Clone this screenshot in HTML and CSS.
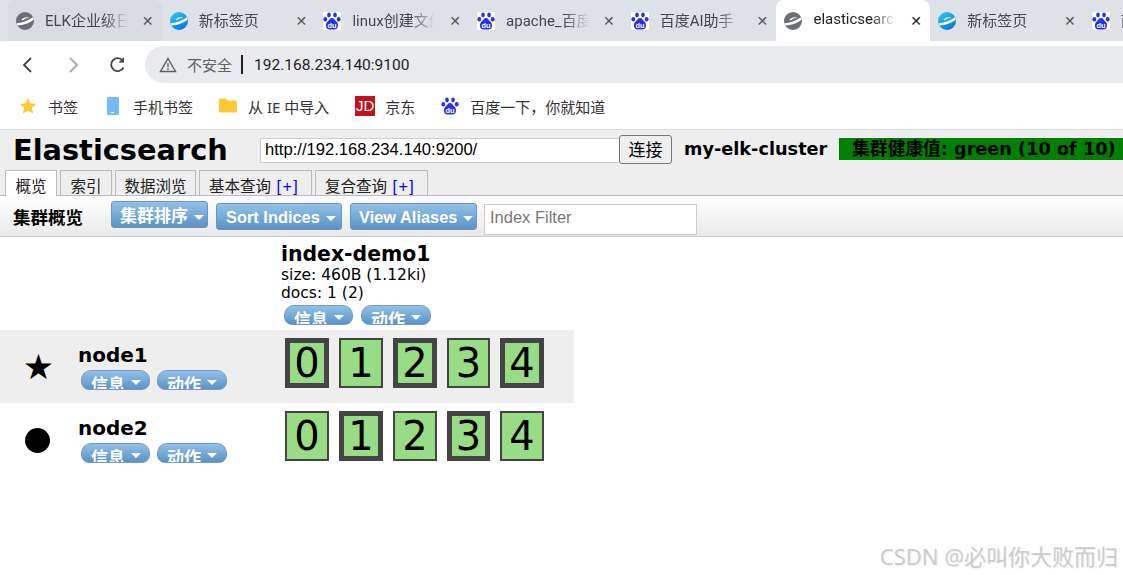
FILE: index.html
```html
<!DOCTYPE html>
<html lang="en">
<head>
    <meta charset="UTF-8">
    <title>elasticsearch-head</title>
    <link rel="stylesheet" href="styles.css">
</head>
<body>
    <svg class="defs" width="0" height="0">
        <symbol id="ie-gray" viewBox="0 0 18 18">
            <circle cx="9" cy="9" r="9" fill="#6b6e73"/>
            <path d="M0.5 11.2 C6 11 12 8.5 17.2 5.2 L17.8 7.8 C12.5 11.5 7 13.4 1.4 13.6 Z" fill="#fff"/>
            <path d="M5.5 7.4 C8 5.4 11 4.8 13.4 5.6 C11 6 8.5 7 6.4 8.6 Z" fill="#fff"/>
        </symbol>
        <linearGradient id="ie-grad" x1="0" y1="0" x2="0.6" y2="1">
            <stop offset="0" stop-color="#2ccdf5"/>
            <stop offset="1" stop-color="#0b7ade"/>
        </linearGradient>
        <symbol id="ie-blue" viewBox="0 0 18 18">
            <circle cx="9" cy="9" r="9" fill="url(#ie-grad)"/>
            <path d="M0.5 11.2 C6 11 12 8.5 17.2 5.2 L17.8 7.8 C12.5 11.5 7 13.4 1.4 13.6 Z" fill="#fff"/>
            <path d="M5.5 7.4 C8 5.4 11 4.8 13.4 5.6 C11 6 8.5 7 6.4 8.6 Z" fill="#fff"/>
        </symbol>
        <symbol id="paw" viewBox="0 0 18 18">
            <ellipse cx="6" cy="3" rx="1.8" ry="2.4" fill="#2932e1"/>
            <ellipse cx="12" cy="3" rx="1.8" ry="2.4" fill="#2932e1"/>
            <ellipse cx="2.3" cy="7.2" rx="1.9" ry="2.3" fill="#2932e1"/>
            <ellipse cx="15.7" cy="7.2" rx="1.9" ry="2.3" fill="#2932e1"/>
            <path d="M9 6 C6.8 6 6.4 8.2 4.4 9.8 C2.4 11.4 2.2 17.4 6 17.4 H12 C15.8 17.4 15.6 11.4 13.6 9.8 C11.6 8.2 11.2 6 9 6 Z" fill="#2932e1"/>
            <text x="9" y="15.8" text-anchor="middle" font-size="7.4" font-weight="700" font-family="Liberation Sans" fill="#fff">du</text>
        </symbol>
    </svg>

    <div class="tabstrip">
        <div class="tab tab-hover"><svg class="fav"><use href="#ie-gray"/></svg><span class="tab-title">ELK企业级日志</span><span class="tab-x">✕</span></div>
        <div class="tab"><svg class="fav"><use href="#ie-blue"/></svg><span class="tab-title">新标签页</span><span class="tab-x">✕</span></div>
        <div class="tab"><svg class="fav fav-box"><use href="#paw"/></svg><span class="tab-title">linux创建文件</span><span class="tab-x">✕</span></div>
        <div class="tab"><svg class="fav fav-box"><use href="#paw"/></svg><span class="tab-title">apache_百度百科</span><span class="tab-x">✕</span></div>
        <div class="tab"><svg class="fav fav-box"><use href="#paw"/></svg><span class="tab-title">百度AI助手</span><span class="tab-x">✕</span></div>
        <div class="tab tab-active"><svg class="fav"><use href="#ie-gray"/></svg><span class="tab-title">elasticsearch-head</span><span class="tab-x">✕</span></div>
        <div class="tab"><svg class="fav"><use href="#ie-blue"/></svg><span class="tab-title">新标签页</span><span class="tab-x">✕</span></div>
        <div class="tab"><svg class="fav fav-box"><use href="#paw"/></svg><span class="tab-title">南京</span></div>
    </div>

    <div class="navbar">
        <svg class="nav-icon" viewBox="0 0 20 20"><path d="M13 3 L6 10 L13 17" fill="none" stroke="#444" stroke-width="1.8"/></svg>
        <svg class="nav-icon" viewBox="0 0 20 20"><path d="M7 3 L14 10 L7 17" fill="none" stroke="#aaa" stroke-width="1.8"/></svg>
        <svg class="nav-icon" viewBox="0 0 20 20"><path d="M15.5 12.5 A6.5 6.5 0 1 1 14.6 5.4" fill="none" stroke="#444" stroke-width="1.8"/><path d="M16 2 V7.5 H10.5 Z" fill="#444"/></svg>
        <div class="address">
            <svg class="warn" viewBox="0 0 18 18"><path d="M9 2.5 L16.5 15.5 H1.5 Z" fill="none" stroke="#5f6368" stroke-width="1.5"/><path d="M9 7 V11.5 M9 12.5 V14" stroke="#5f6368" stroke-width="1.4"/></svg>
            <span class="insecure">不安全</span>
            <span class="url">192.168.234.140:9100</span>
        </div>
    </div>

    <div class="bookmarks">
        <div class="bm"><svg class="bm-icon" viewBox="0 0 18 18"><path d="M9 1 L11.4 6.3 L17 7 L12.9 10.9 L14 16.6 L9 13.8 L4 16.6 L5.1 10.9 L1 7 L6.6 6.3 Z" fill="#fcc934"/></svg>书签</div>
        <div class="bm"><svg class="bm-icon" viewBox="0 0 18 18"><rect x="3" y="0" width="12" height="18" rx="1.5" fill="#74b9fb"/><rect x="7" y="15" width="3" height="1" fill="#fff"/></svg>手机书签</div>
        <div class="bm"><svg class="bm-icon" viewBox="0 0 18 18"><path d="M0 3 Q0 1.5 1.5 1.5 H6.5 L8.5 3.5 H16.5 Q18 3.5 18 5 V14 Q18 15.5 16.5 15.5 H1.5 Q0 15.5 0 14 Z" fill="#fcc934"/></svg>从 IE 中导入</div>
        <div class="bm"><span class="jd">JD</span>京东</div>
        <div class="bm"><svg class="bm-icon" viewBox="0 0 18 18"><use href="#paw"/></svg>百度一下，你就知道</div>
    </div>

    <div class="es-header">
        <h1 class="es-title">Elasticsearch</h1>
        <input class="es-url" type="text" value="http://192.168.234.140:9200/">
        <button class="es-connect">连接</button>
        <span class="es-cluster">my-elk-cluster</span>
        <span class="es-health">集群健康值: green (10 of 10)</span>
    </div>

    <div class="es-tabs">
        <div class="es-tab es-tab-active">概览</div>
        <div class="es-tab">索引</div>
        <div class="es-tab">数据浏览</div>
        <div class="es-tab es-tab-wide">基本查询 <span class="plus">[+]</span></div>
        <div class="es-tab es-tab-wide">复合查询 <span class="plus">[+]</span></div>
    </div>

    <div class="toolbar">
        <h2 class="toolbar-title">集群概览</h2>
        <div class="menu-btn menu-cjk">集群排序<i class="caret"></i></div>
        <div class="menu-btn menu-sort">Sort Indices<i class="caret"></i></div>
        <div class="menu-btn menu-alias">View Aliases<i class="caret"></i></div>
        <input class="filter" type="text" placeholder="Index Filter">
    </div>

    <div class="overview">
        <div class="index-row">
            <div class="index-head">
                <div class="index-name">index-demo1</div>
                <div class="index-meta">size: 460B (1.12ki)</div>
                <div class="index-meta">docs: 1 (2)</div>
                <div class="pills pills-index">
                    <div class="pill pill-info">信息<i class="caret"></i></div>
                    <div class="pill pill-act">动作<i class="caret"></i></div>
                </div>
            </div>
        </div>

        <div class="node-row node-row-odd">
            <div class="node-mark">★</div>
            <div class="node-info">
                <div class="node-name">node1</div>
                <div class="pills">
                    <div class="pill pill-info">信息<i class="caret"></i></div>
                    <div class="pill pill-act">动作<i class="caret"></i></div>
                </div>
            </div>
            <div class="shards">
                <div class="shard shard-p">0</div>
                <div class="shard">1</div>
                <div class="shard shard-p">2</div>
                <div class="shard">3</div>
                <div class="shard shard-p">4</div>
            </div>
        </div>

        <div class="node-row">
            <div class="node-mark"><span class="dot"></span></div>
            <div class="node-info">
                <div class="node-name">node2</div>
                <div class="pills">
                    <div class="pill pill-info">信息<i class="caret"></i></div>
                    <div class="pill pill-act">动作<i class="caret"></i></div>
                </div>
            </div>
            <div class="shards">
                <div class="shard">0</div>
                <div class="shard shard-p">1</div>
                <div class="shard">2</div>
                <div class="shard shard-p">3</div>
                <div class="shard">4</div>
            </div>
        </div>
    </div>

    <div class="watermark">CSDN @必叫你大败而归</div>
</body>
</html>
```

FILE: styles.css
```css
html, body {
    margin: 0;
    height: 575px;
    overflow: hidden;
    background: #fff;
}

body {
    position: relative;
    font-family: "Noto Sans CJK SC", sans-serif;
}

.defs {
    position: absolute;
}

/* browser chrome */
.tabstrip {
    display: flex;
    height: 41px;
    padding-left: 8px;
    background: #dee1e6;
    overflow: hidden;
}

.tab {
    flex: 0 0 153.7px;
    min-width: 0;
    display: flex;
    align-items: center;
    box-sizing: border-box;
    padding: 0 7px 0 8px;
    font-family: Roboto, "Noto Sans CJK SC", sans-serif;
    font-size: 15px;
    color: #45474a;
}

.tab-hover {
    background: #d8dbe2;
    border-radius: 8px 8px 0 0;
}

.tab-active {
    background: #fff;
    border-radius: 8px 8px 0 0;
    color: #222;
}

.fav {
    flex: none;
    width: 18px;
    height: 18px;
}

.fav-box {
    background: #fff;
    border-radius: 2px;
}

.tab-title {
    flex: 1;
    min-width: 0;
    margin: 0 0 3px 11px;
    white-space: nowrap;
    overflow: hidden;
    -webkit-mask-image: linear-gradient(to right, #000 70%, transparent 100%);
    mask-image: linear-gradient(to right, #000 70%, transparent 100%);
}

.tab-x {
    flex: none;
    width: 14px;
    margin-left: 13px;
    font-family: "DejaVu Sans", sans-serif;
    font-size: 14px;
    font-weight: 700;
    text-align: center;
    color: #555;
}

.tab-active .tab-x {
    color: #222;
}

.navbar {
    display: flex;
    height: 42px;
    box-sizing: border-box;
    padding-top: 5px;
}

.nav-icon {
    flex: none;
    width: 20px;
    height: 20px;
    margin: 9px 7px 0 18px;
}

.address {
    display: flex;
    align-items: center;
    flex: 1;
    margin-left: 10px;
    padding-left: 14px;
    background: #e8eaed;
    border-radius: 19px 0 0 19px;
    color: #222;
}

.warn {
    width: 18px;
    height: 18px;
}

.insecure {
    margin-left: 10px;
    padding-right: 9px;
    border-right: 2px solid #222;
    font-size: 15px;
    line-height: 19px;
    color: #5f6368;
}

.url {
    margin-left: 11px;
    font-family: Roboto, sans-serif;
    font-size: 15.5px;
}

.bookmarks {
    display: flex;
    align-items: center;
    height: 46px;
    padding-left: 19px;
    font-family: "Noto Sans", "Noto Sans CJK SC", sans-serif;
    font-size: 15px;
    color: #333;
}

.bm {
    display: flex;
    align-items: center;
    margin-right: 26px;
}

.bm-icon {
    width: 18px;
    height: 18px;
    margin-right: 11px;
}

.jd {
    width: 20px;
    height: 20px;
    margin-right: 10px;
    background: #c4111f;
    color: #fff;
    font-family: "Liberation Sans", sans-serif;
    font-size: 15px;
    line-height: 20px;
    text-align: center;
}

/* head plugin */
.es-header {
    display: flex;
    align-items: center;
    height: 40px;
    background: #eee;
    border-top: 1px solid #ddd;
}

.es-title {
    margin: 0 0 0 13px;
    width: 215px;
    font-family: "DejaVu Sans", sans-serif;
    font-size: 28.8px;
    font-weight: 700;
    white-space: nowrap;
}

.es-url {
    width: 360px;
    height: 25px;
    margin: 0 0 0 32px;
    padding: 0 4px;
    box-sizing: border-box;
    border: 1px solid #ccc;
    font-family: "Liberation Sans", sans-serif;
    font-size: 16.6px;
}

.es-connect {
    width: 53px;
    height: 29px;
    margin: -2px 0 0 -1px;
    padding: 0 0 2px;
    background: #efefef;
    border: 1px solid #767676;
    border-radius: 3px;
    font-family: "Noto Sans CJK SC", sans-serif;
    font-size: 17px;
}

.es-cluster {
    margin: -2px 0 0 12px;
    font-family: "DejaVu Sans", sans-serif;
    font-size: 17.7px;
    font-weight: 700;
}

.es-health {
    flex: 1;
    height: 22px;
    margin: -2px 0 0 12px;
    padding-left: 13px;
    background: #008000;
    font-family: "DejaVu Sans", "Noto Sans CJK SC", sans-serif;
    font-size: 17.7px;
    font-weight: 700;
    line-height: 22px;
    white-space: nowrap;
    overflow: hidden;
}

.es-tabs {
    display: flex;
    gap: 3px;
    height: 25px;
    padding-left: 5px;
    background: #eee;
}

.es-tab {
    box-sizing: border-box;
    width: 52px;
    height: 26px;
    border: 1px solid #bbb;
    border-bottom: 0;
    font-size: 15.5px;
    line-height: 29px;
    text-align: center;
    color: #222;
    overflow: hidden;
}

.es-tab:nth-child(3) {
    width: 81px;
}

.es-tab-wide {
    width: 113px;
    padding-left: 9px;
    text-align: left;
    white-space: nowrap;
}

.es-tab-active {
    position: relative;
    background: #fff;
}

.plus {
    margin-left: 2px;
    color: #00f;
    font-family: "Liberation Sans", sans-serif;
    font-size: 16px;
    letter-spacing: 1.5px;
}

.toolbar {
    display: flex;
    align-items: center;
    height: 40px;
    border-top: 1px solid #bbb;
    border-bottom: 1px solid #ccc;
    background: linear-gradient(#fff, #e9e9e9);
}

.toolbar-title {
    width: 98px;
    margin: 0 0 0 13px;
    font-size: 17.5px;
    font-weight: 700;
}

.menu-btn {
    box-sizing: border-box;
    height: 27px;
    margin-right: 8px;
    padding-left: 9px;
    background: linear-gradient(#93c1e8, #5a93c6);
    border: 1px solid #6d93c9;
    border-radius: 3px;
    color: #fff;
    font-family: "Liberation Sans", "Noto Sans CJK SC", sans-serif;
    font-size: 16.4px;
    font-weight: 700;
    line-height: 26px;
    white-space: nowrap;
    overflow: hidden;
}

.menu-cjk {
    width: 97px;
    margin-top: -4px;
    padding-left: 8px;
    font-size: 17px;
    line-height: 29px;
}

.menu-sort {
    width: 126px;
}

.menu-alias {
    width: 127px;
    margin-right: 7px;
    padding-left: 8px;
}

.caret {
    display: inline-block;
    margin-left: 6px;
    vertical-align: middle;
    border-top: 5px solid #fff;
    border-left: 5px solid transparent;
    border-right: 5px solid transparent;
}

.filter {
    box-sizing: border-box;
    width: 213px;
    height: 31px;
    margin-top: 6px;
    padding: 0 5px 4px;
    border: 1px solid #ccc;
    font-family: "Liberation Sans", sans-serif;
    font-size: 16.5px;
}

.filter::placeholder {
    color: #777;
}

.index-row {
    height: 93px;
    padding-left: 281px;
}

.index-head {
    padding-top: 5px;
}

.index-name {
    font-family: "DejaVu Sans", sans-serif;
    font-size: 20.4px;
    font-weight: 700;
    line-height: 24px;
}

.index-meta {
    font-family: "DejaVu Sans", sans-serif;
    font-size: 15.5px;
    line-height: 18px;
}

.pills {
    display: flex;
    gap: 7px;
    margin: 3px 0 0 3px;
}

.pills-index {
    margin-top: 3px;
    gap: 8px;
}

.pill {
    box-sizing: border-box;
    height: 20px;
    padding-left: 9px;
    background: linear-gradient(#93c1e8, #5a93c6);
    border: 1px solid #7499cc;
    border-radius: 10px 10px 8px 8px;
    color: #fff;
    font-size: 17px;
    font-weight: 700;
    line-height: 26px;
    white-space: nowrap;
    overflow: hidden;
}

.pill-info {
    width: 69px;
}

.pill-act {
    width: 70px;
}

.pill .caret {
    margin: -8px 0 0 6px;
}

.node-row {
    display: flex;
    width: 574px;
    height: 73px;
}

.node-row-odd {
    background: #eee;
}

.node-mark {
    flex: none;
    width: 77px;
    padding-top: 17px;
    box-sizing: border-box;
    font-family: "DejaVu Sans", sans-serif;
    font-size: 35px;
    line-height: 40px;
    text-align: center;
}

.dot {
    display: block;
    width: 25px;
    height: 25px;
    margin: 8px 0 0 25px;
    background: #000;
    border-radius: 50%;
}

.node-info {
    flex: none;
    width: 205px;
    padding: 13px 0 0 1px;
    box-sizing: border-box;
}

.node-name {
    font-family: "DejaVu Sans", sans-serif;
    font-size: 20px;
    font-weight: 700;
    line-height: 24px;
}

.shards {
    display: flex;
    gap: 10px;
    padding: 8px 0 0 3px;
}

.shard {
    box-sizing: border-box;
    width: 44px;
    height: 50px;
    background: #98dc85;
    border: 2px solid #444;
    font-family: "DejaVu Sans", sans-serif;
    font-size: 40px;
    line-height: 46px;
    text-align: center;
}

.shard:nth-child(4) {
    width: 43px;
}

.shard-p {
    border-width: 5px;
    line-height: 40px;
}

.watermark {
    position: absolute;
    right: 5px;
    top: 539px;
    font-family: "Noto Sans", "Noto Sans CJK SC", sans-serif;
    font-size: 22px;
    color: #ccc;
    text-shadow: 1px 1px 1px #eee;
}
```
